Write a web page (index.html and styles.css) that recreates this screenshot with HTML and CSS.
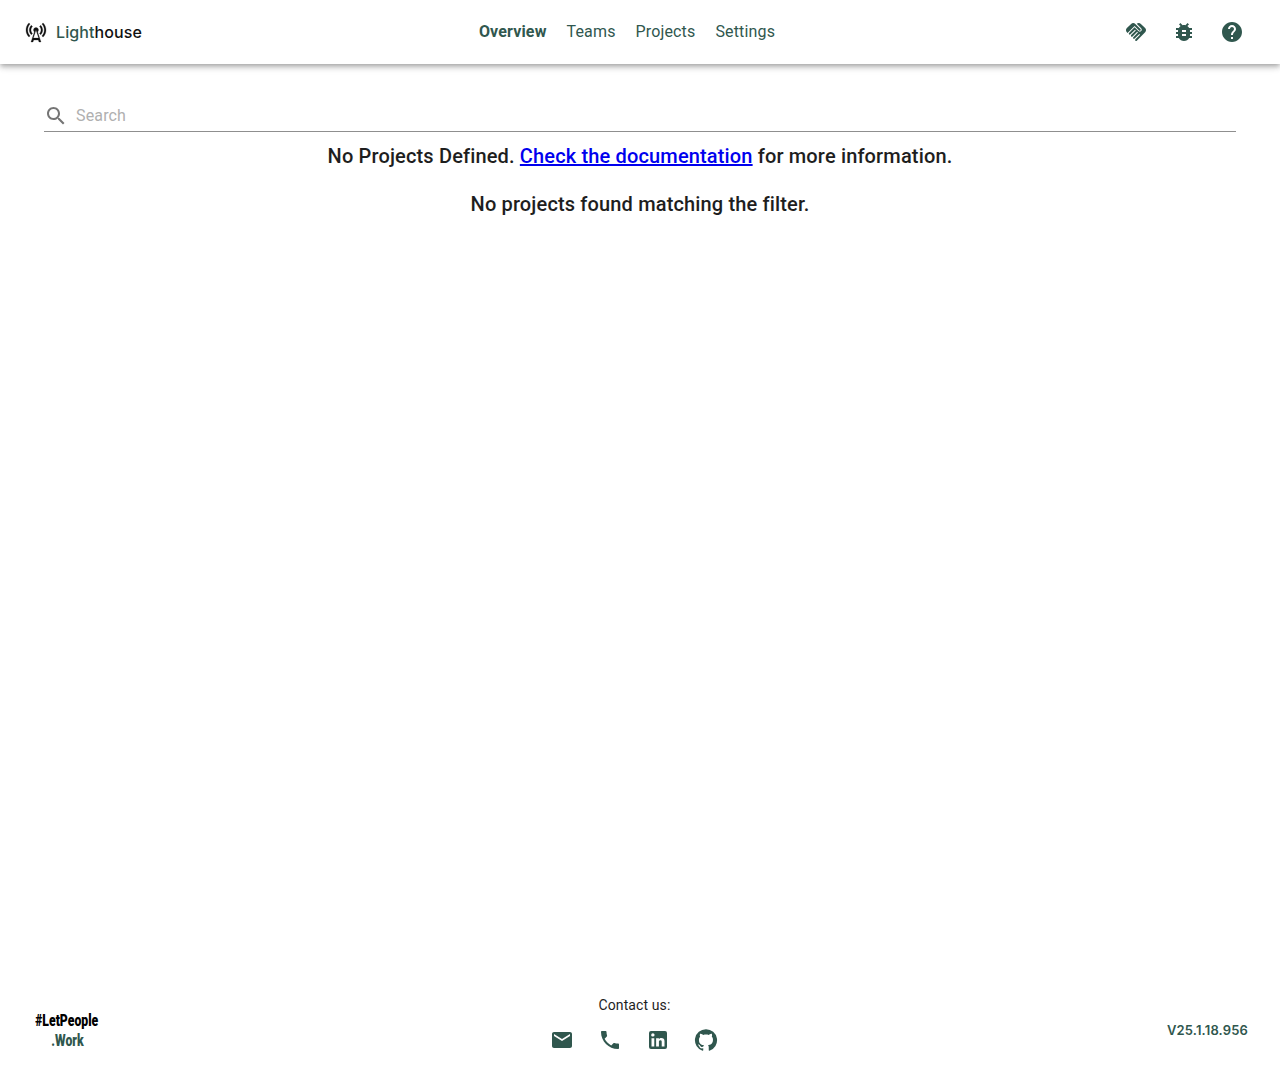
FILE: index.html
```html
<!DOCTYPE html>
<html lang="en">
<head>
<meta charset="UTF-8" />
<title>Lighthouse</title>
<link rel="stylesheet" href="styles.css">
</head>
<body>

<header class="app-bar">
  <div class="brand">
    <svg class="icon brand-icon" viewBox="0 0 24 24"><path d="M7.3 14.7l1.2-1.2c-1-1-1.5-2.3-1.5-3.5s.5-2.5 1.5-3.5L7.3 5.3C6 6.6 5.3 8.3 5.3 10s.7 3.4 2 4.7zM19.1 2.9l-1.2 1.2c1.6 1.6 2.4 3.8 2.4 5.9s-.8 4.3-2.4 5.9l1.2 1.2c2-2 2.9-4.5 2.9-7.1s-1-5.1-2.9-7.1zM6.1 4.1L4.9 2.9C3 4.9 2 7.4 2 10s1 5.1 2.9 7.1l1.2-1.2c-1.6-1.6-2.4-3.8-2.4-5.9s.8-4.3 2.4-5.9zM16.7 14.7c1.3-1.3 2-3 2-4.7-.1-1.7-.7-3.4-2-4.7l-1.2 1.2c1 1 1.5 2.3 1.5 3.5s-.5 2.5-1.5 3.5l1.2 1.2zM14.5 10c0-1.38-1.12-2.5-2.5-2.5S9.5 8.62 9.5 10c0 .76.34 1.42.87 1.88L7 22h2l.67-2h4.67l.66 2h2l-3.37-10.12c.53-.46.87-1.12.87-1.88zm-5.17 8L12 10l2.67 8H9.33z"/></svg>
    <span class="brand-name"><span class="brand-light">Light</span>house</span>
  </div>

  <nav class="nav">
    <a class="nav-link active" href="#">Overview</a>
    <a class="nav-link" href="#">Teams</a>
    <a class="nav-link" href="#">Projects</a>
    <a class="nav-link" href="#">Settings</a>
  </nav>

  <div class="bar-actions">
    <button class="icon-btn"><svg class="icon" viewBox="0 0 24 24"><path d="M16.48 10.41c-.39.39-1.04.39-1.43 0l-4.47-4.46-7.05 7.04-.66-.63c-1.17-1.17-1.17-3.07 0-4.24l4.24-4.24c1.17-1.17 3.07-1.17 4.24 0L16.48 9c.39.39.39 1.02 0 1.41zm.7-2.12c.78.78.78 2.05 0 2.83-1.27 1.27-2.61.22-2.83 0l-3.76-3.76-5.57 5.57c-.39.39-.39 1.02 0 1.41.39.39 1.02.39 1.42 0l4.62-4.62.71.71-4.62 4.62c-.39.39-.39 1.02 0 1.41.39.39 1.02.39 1.42 0l4.62-4.62.71.71-4.62 4.62c-.39.39-.39 1.02 0 1.41.39.39 1.02.39 1.41 0l4.62-4.62.71.71-4.62 4.62c-.39.39-.39 1.02 0 1.41.39.39 1.02.39 1.41 0l8.32-8.34c1.17-1.17 1.17-3.07 0-4.24l-4.24-4.24c-1.15-1.15-3.01-1.17-4.18-.06l4.47 4.47z"/></svg></button>
    <button class="icon-btn"><svg class="icon" viewBox="0 0 24 24"><path d="M20 8h-2.81c-.45-.78-1.07-1.45-1.82-1.96L17 4.41 15.59 3l-2.17 2.17C12.96 5.06 12.49 5 12 5c-.49 0-.96.06-1.41.17L8.41 3 7 4.41l1.62 1.63C7.88 6.55 7.26 7.22 6.81 8H4v2h2.09c-.05.33-.09.66-.09 1v1H4v2h2v1c0 .34.04.67.09 1H4v2h2.81c1.04 1.79 2.97 3 5.19 3s4.15-1.21 5.19-3H20v-2h-2.09c.05-.33.09-.66.09-1v-1h2v-2h-2v-1c0-.34-.04-.67-.09-1H20V8zm-6 8h-4v-2h4v2zm0-4h-4v-2h4v2z"/></svg></button>
    <button class="icon-btn"><svg class="icon" viewBox="0 0 24 24"><path d="M12 2C6.48 2 2 6.48 2 12s4.48 10 10 10 10-4.48 10-10S17.52 2 12 2zm1 17h-2v-2h2v2zm2.07-7.75l-.9.92C13.45 12.9 13 13.5 13 15h-2v-.5c0-1.1.45-2.1 1.17-2.83l1.24-1.26c.37-.36.59-.86.59-1.41 0-1.1-.9-2-2-2s-2 .9-2 2H8c0-2.21 1.79-4 4-4s4 1.79 4 4c0 .88-.36 1.68-.93 2.25z"/></svg></button>
  </div>
</header>

<main class="content">
  <div class="search">
    <svg class="icon search-icon" viewBox="0 0 24 24"><path d="M15.5 14h-.79l-.28-.27C15.41 12.59 16 11.11 16 9.5 16 5.91 13.09 3 9.5 3S3 5.91 3 9.5 5.91 16 9.5 16c1.61 0 3.09-.59 4.23-1.57l.27.28v.79l5 4.99L20.49 19l-4.99-5zm-6 0C7.01 14 5 11.99 5 9.5S7.01 5 9.5 5 14 7.01 14 9.5 11.99 14 9.5 14z"/></svg>
    <input class="search-input" type="text" placeholder="Search" />
  </div>
  <p class="message">No Projects Defined. <a href="#">Check the documentation</a> for more information.</p>
  <p class="message">No projects found matching the filter.</p>
</main>

<footer class="footer">
  <div class="tag">
    <div class="tag-top">#LetPeople</div>
    <div class="tag-bottom">.Work</div>
  </div>

  <div class="contact">
    <div class="contact-label">Contact us:</div>
    <div class="contact-icons">
      <a class="icon-btn" href="#"><svg class="icon" viewBox="0 0 24 24"><path d="M20 4H4c-1.1 0-1.99.9-1.99 2L2 18c0 1.1.9 2 2 2h16c1.1 0 2-.9 2-2V6c0-1.1-.9-2-2-2zm0 4l-8 5-8-5V6l8 5 8-5v2z"/></svg></a>
      <a class="icon-btn" href="#"><svg class="icon" viewBox="0 0 24 24"><path d="M6.62 10.79c1.44 2.83 3.76 5.14 6.59 6.59l2.2-2.2c.27-.27.67-.36 1.02-.24 1.12.37 2.33.57 3.57.57.55 0 1 .45 1 1V20c0 .55-.45 1-1 1-9.39 0-17-7.61-17-17 0-.55.45-1 1-1h3.5c.55 0 1 .45 1 1 0 1.25.2 2.45.57 3.57.11.35.03.74-.25 1.02l-2.2 2.2z"/></svg></a>
      <a class="icon-btn" href="#"><svg class="icon" viewBox="0 0 24 24"><path d="M19 3a2 2 0 0 1 2 2v14a2 2 0 0 1-2 2H5a2 2 0 0 1-2-2V5a2 2 0 0 1 2-2h14m-.5 15.5v-5.3a3.26 3.26 0 0 0-3.26-3.26c-.85 0-1.84.52-2.32 1.3v-1.11h-2.79v8.37h2.79v-4.93c0-.77.62-1.4 1.39-1.4a1.4 1.4 0 0 1 1.4 1.4v4.93h2.79M6.88 8.56a1.68 1.68 0 0 0 1.68-1.68c0-.93-.75-1.69-1.68-1.69a1.69 1.69 0 0 0-1.69 1.69c0 .93.76 1.68 1.69 1.68m1.39 9.94v-8.37H5.5v8.37h2.77z"/></svg></a>
      <a class="icon-btn" href="#"><svg class="icon" viewBox="0 0 24 24"><path d="M12 1.27a11 11 0 00-3.48 21.46c.55.09.73-.28.73-.55v-1.84c-3.03.64-3.67-1.46-3.67-1.46-.55-1.29-1.28-1.65-1.28-1.65-.92-.65.1-.65.1-.65 1.1 0 1.73 1.1 1.73 1.1.92 1.65 2.57 1.2 3.21.92a2 2 0 01.64-1.47c-2.47-.27-5.04-1.19-5.04-5.5 0-1.1.46-2.1 1.2-2.84a3.76 3.76 0 010-2.93s.91-.28 3.11 1.1c1.8-.49 3.7-.49 5.5 0 2.1-1.38 3.02-1.1 3.02-1.1a3.76 3.76 0 010 2.93c.83.74 1.2 1.74 1.2 2.94 0 4.21-2.57 5.13-5.04 5.4.45.37.82.92.82 2.02v3.03c0 .27.1.64.73.55A11 11 0 0012 1.27"/></svg></a>
    </div>
  </div>

  <div class="version">V25.1.18.956</div>
</footer>

</body>
</html>
```

FILE: styles.css
```css
html, body {
  margin: 0;
  height: 100%;
}
body {
  display: flex;
  flex-direction: column;
  font-family: Roboto, "Liberation Sans", sans-serif;
  color: #1e1e1e;
  background: #fff;
}
.icon {
  display: block;
  width: 24px;
  height: 24px;
  fill: #30574e;
}
.icon-btn {
  display: flex;
  align-items: center;
  justify-content: center;
  width: 48px;
  height: 48px;
  padding: 0;
  border: none;
  background: none;
}

/* top bar */
.app-bar {
  display: flex;
  align-items: center;
  justify-content: space-between;
  height: 64px;
  padding: 0 24px;
  box-sizing: border-box;
  background: #fff;
  box-shadow: 0 2px 4px -1px rgba(0,0,0,0.2), 0 4px 5px 0 rgba(0,0,0,0.14), 0 1px 10px 0 rgba(0,0,0,0.12);
}
.brand {
  display: flex;
  align-items: center;
  gap: 8px;
  width: 118px;
}
.brand-icon {
  flex: none;
  fill: #111;
  stroke: #111;
  stroke-width: 0.25;
}
.brand-name {
  font-family: Inter, sans-serif;
  font-size: 16px;
  font-weight: 500;
  letter-spacing: 0.1px;
  white-space: nowrap;
  color: #111;
}
.brand-light {
  color: #30574e;
}
.nav {
  display: flex;
  gap: 20px;
  margin-top: -1px;
}
.nav-link {
  font-size: 16px;
  letter-spacing: 0.15px;
  color: #30574e;
  text-decoration: none;
}
.nav-link.active {
  font-weight: 700;
}
.bar-actions {
  display: flex;
}

/* main */
.content {
  flex: 1;
  padding: 24px 44px 0;
}
.search {
  display: flex;
  align-items: center;
  gap: 8px;
  height: 44px;
  padding-top: 12px;
  border-bottom: 1px solid #8f8f8f;
  box-sizing: border-box;
}
.search-icon {
  fill: #757575;
}
.search-input {
  flex: 1;
  border: none;
  outline: none;
  padding: 0;
  font-family: inherit;
  font-size: 16px;
  letter-spacing: 0.15px;
  color: #1e1e1e;
}
.search-input::placeholder {
  color: #b0b0b0;
  opacity: 1;
}
.message {
  margin: 0 0 24px;
  height: 24px;
  line-height: 24px;
  font-size: 20px;
  font-weight: 500;
  letter-spacing: 0.15px;
  text-align: center;
}
.search + .message {
  margin-top: 12px;
}
.message a {
  color: #0000ee;
}

/* footer */
.footer {
  display: flex;
  align-items: center;
  justify-content: space-between;
  height: 69px;
  margin-bottom: 16px;
  padding: 0 32px;
}
.tag {
  display: flex;
  flex-direction: column;
  align-items: center;
  width: 70px;
  padding-top: 1px;
  font-weight: 900;
  font-size: 17px;
  line-height: 20px;
}
.tag-top {
  color: #000;
  transform: scaleX(0.72);
  white-space: nowrap;
}
.tag-bottom {
  color: #30574e;
  transform: scaleX(0.72);
}
.contact {
  display: flex;
  flex-direction: column;
  align-items: center;
}
.contact-label {
  font-size: 14px;
  line-height: 20px;
  letter-spacing: 0.1px;
  margin-bottom: 1px;
}
.contact-icons {
  display: flex;
}
.version {
  font-family: Inter, sans-serif;
  font-size: 13px;
  font-weight: 600;
  letter-spacing: 0.15px;
  color: #30574e;
}
```
